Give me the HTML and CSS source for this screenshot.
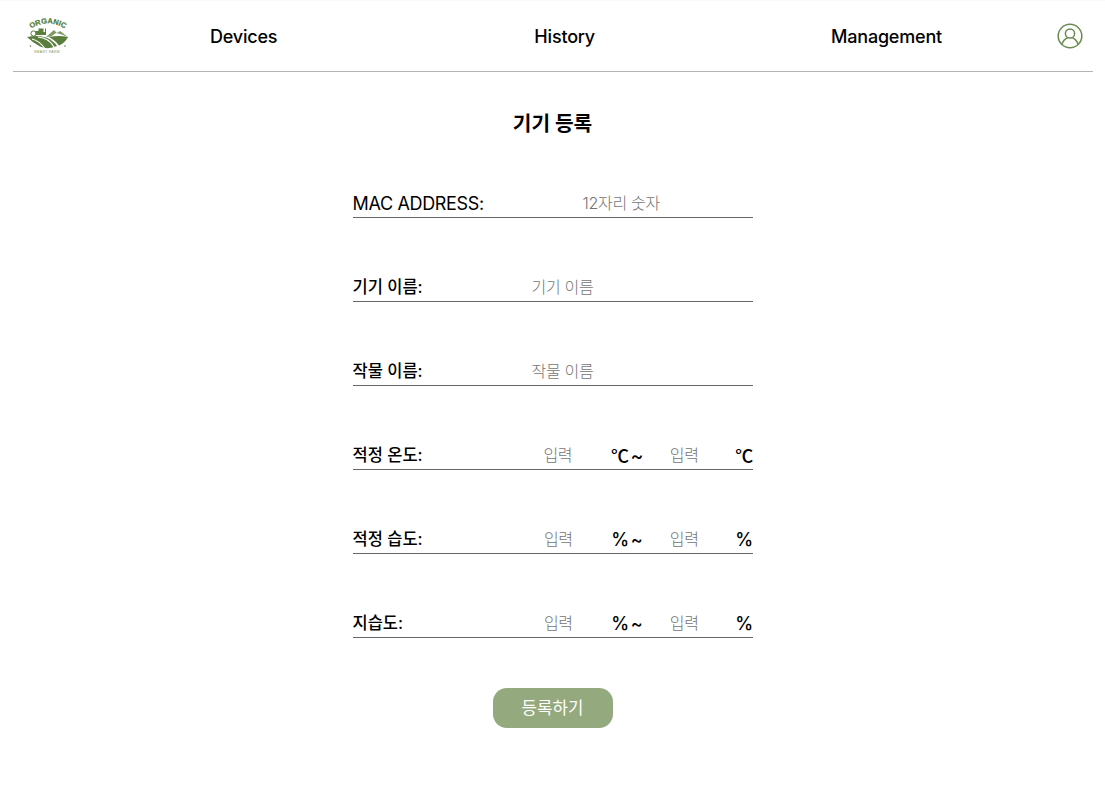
FILE: index.html
```html
<!DOCTYPE html>
<html lang="ko">
<head>
<meta charset="utf-8">
<title>기기 등록</title>
<link rel="stylesheet" href="styles.css">
</head>
<body>
<header class="header">
  <svg class="logo" viewBox="0 0 42 38" aria-label="Organic Smart Farm">
    <path id="logo-arc" d="M2 13 Q21 0 40 13" fill="none"/>
    <text class="logo-title"><textPath href="#logo-arc" startOffset="50%" text-anchor="middle">ORGANIC</textPath></text>
    <circle cx="6.5" cy="16.5" r="2.6" fill="none" stroke="#5a7f3c" stroke-width="1"/>
    <path d="M8.5 14 h3 v-2.5 h5 v3.5 h1.5 v-3.5 h1 v6.5 h-10.5z" fill="#5a7f3c"/>
    <path d="M19 20 L27 13 L30 16 L33 14 L41 20 L36 18 L33 17 L29 16 L24 19.5z" fill="#7d9a63"/>
    <path d="M0 20 Q10 18 19 20.5 Q27 24 30 29 Q21 33 13 29.5 Q6 26 0 20z" fill="#5a7f3c"/>
    <path d="M11 20 Q22 21 27 30" stroke="#fff" stroke-width="1.2" fill="none"/>
    <path d="M5 22 Q13 24 18 32" stroke="#fff" stroke-width="1.2" fill="none"/>
    <path d="M22 20 Q32 18 41 20 Q38 26 32 28.5 Q29 24 22 20z" fill="#5a7f3c"/>
    <circle cx="3.5" cy="29" r=".8" fill="#5a7f3c"/>
    <circle cx="38" cy="29" r=".8" fill="#5a7f3c"/>
    <text class="logo-sub" x="20" y="36" text-anchor="middle">SMART FARM</text>
  </svg>
  <nav class="nav">
    <a class="nav-item devices">Devices</a>
    <a class="nav-item history">History</a>
    <a class="nav-item management">Management</a>
  </nav>
  <svg class="user" viewBox="0 0 26 26" aria-label="user">
    <circle cx="13" cy="13" r="11.8" fill="none" stroke="#6a8c50" stroke-width="1.5"/>
    <circle cx="13" cy="10.5" r="4.6" fill="none" stroke="#6a8c50" stroke-width="1.5"/>
    <path d="M5 21.5 C6 17.5 9 15.5 10.5 15 M21 21.5 C20 17.5 17 15.5 15.5 15" fill="none" stroke="#6a8c50" stroke-width="1.5"/>
  </svg>
</header>
<main class="main">
  <h1 class="title">기기 등록</h1>
  <form class="form">
    <div class="row mac">
      <label class="label">MAC ADDRESS:</label>
      <input class="field" placeholder="12자리 숫자">
    </div>
    <div class="row text">
      <label class="label">기기 이름:</label>
      <input class="field" placeholder="기기 이름">
    </div>
    <div class="row text">
      <label class="label">작물 이름:</label>
      <input class="field" placeholder="작물 이름">
    </div>
    <div class="row range temp">
      <label class="label">적정 온도:</label>
      <input class="num" placeholder="입력">
      <span class="unit first">℃ ~</span>
      <input class="num" placeholder="입력">
      <span class="unit last">℃</span>
    </div>
    <div class="row range">
      <label class="label">적정 습도:</label>
      <input class="num" placeholder="입력">
      <span class="unit first">% ~</span>
      <input class="num" placeholder="입력">
      <span class="unit last">%</span>
    </div>
    <div class="row range">
      <label class="label">지습도:</label>
      <input class="num" placeholder="입력">
      <span class="unit first">% ~</span>
      <input class="num" placeholder="입력">
      <span class="unit last">%</span>
    </div>
    <button class="submit" type="button">등록하기</button>
  </form>
</main>
</body>
</html>
```
FILE: styles.css
```css
* { box-sizing: border-box; }
html, body { margin: 0; padding: 0; }
body {
  background: #fff;
  color: #000;
  font-family: Inter, "Noto Sans CJK KR", sans-serif;
  border-top: 1px solid #fdf8f5;
  height: 801px;
  overflow: hidden;
}
.header {
  display: flex;
  align-items: center;
  height: 71px;
  margin: 0 12px 0 13px;
  padding: 0 10px 0 14px;
  border-bottom: 1px solid #b3b3b3;
}
.logo { width: 42px; height: 38px; flex: none; }
.logo-title { font: 700 7.5px "Liberation Sans", sans-serif; fill: #4f7a35; stroke: #4f7a35; stroke-width: .2; letter-spacing: .1px; }
.logo-sub { font: 400 3.4px "Liberation Sans", sans-serif; fill: #7d9668; letter-spacing: .4px; }
.nav { flex: 1; display: flex; padding-top: 2px; }
.nav-item { font-size: 18px; font-weight: 500; line-height: 24px; letter-spacing: -.2px; }
.devices { margin-left: 141px; }
.history { margin-left: 257px; }
.management { margin-left: 236px; }
.user { width: 26px; height: 26px; flex: none; margin-left: 1px; }
.main { display: flex; flex-direction: column; align-items: center; }
.title {
  margin: 37px 0 0;
  font-size: 20.3px;
  font-weight: 700;
  line-height: 30px;
}
.form { width: 400px; margin-top: 49px; display: flex; flex-direction: column; }
.row {
  display: flex;
  align-items: center;
  height: 30px;
  margin-bottom: 54px;
  border-bottom: 1px solid #666;
}
.label { font-size: 18px; font-weight: 500; line-height: 28px; flex: none; }
.text .label { width: 179px; font-size: 16.5px; padding-top: 1px; }
.range .label { flex: 1; font-size: 16.5px; padding-top: 1px; }
.mac .label { width: 230px; font-weight: 400; letter-spacing: -.33px; padding-top: 2px; }
.field, .num {
  border: 0;
  outline: 0;
  padding: 0;
  background: transparent;
  font-family: inherit;
  font-size: 16px;
  font-weight: 300;
  letter-spacing: -.3px;
  min-width: 0;
}
.field { flex: 1; }
.num { width: 60px; flex: none; text-align: center; }
.unit { font-size: 18px; font-weight: 500; flex: none; word-spacing: -2px; letter-spacing: -.6px; padding-top: 1px; }
.temp .unit { font-family: Roboto, "Noto Sans CJK KR", sans-serif; word-spacing: -1px; letter-spacing: -.7px; }
.unit.first { margin-left: 23px; margin-right: 12px; }
.unit.last { margin-left: 21px; }
.submit {
  align-self: center;
  width: 120px;
  height: 40px;
  margin-top: -4px;
  padding: 0 0 2px;
  border: 0;
  border-radius: 14px;
  background: #94a97d;
  color: #fff;
  font-family: inherit;
  font-size: 16.8px;
  font-weight: 400;
}
```
